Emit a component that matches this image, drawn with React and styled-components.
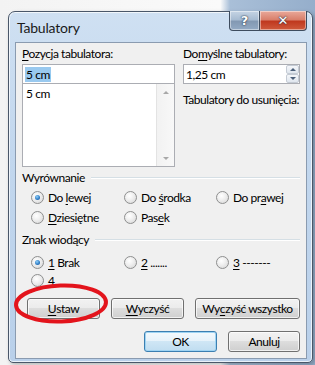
import React from "react";
import styled, { createGlobalStyle } from "styled-components";

const GlobalStyle = createGlobalStyle`
  html, body {
    margin: 0;
    padding: 0;
  }
  body {
    width: 315px;
    height: 365px;
    overflow: hidden;
    font-family: Lato, "Noto Sans", sans-serif;
    font-size: 12px;
    letter-spacing: -0.45px;
    color: #000;
    background: linear-gradient(90deg, #f3f3f3 0%, #fafafa 70%, #a9bfd8 73%, #95aecb 100%);
  }
`;

const Stage = styled.div`
  position: relative;
  padding: 11px 0 0 8px;
  height: 354px;
`;

const Window = styled.div`
  width: 303px;
  height: 350px;
  border: 1px solid #4a5769;
  border-radius: 7px 7px 5px 5px;
  background: linear-gradient(180deg, #cfe0f2 0%, #c2d7ee 40%, #b9d0ea 100%);
  box-shadow: inset 0 0 0 1px rgba(255, 255, 255, 0.7), 2px 2px 4px rgba(0, 0, 0, 0.25);
  display: flex;
  flex-direction: column;
`;

const TitleBar = styled.div`
  height: 30px;
  display: flex;
  align-items: flex-start;
  justify-content: space-between;
`;

const Title = styled.div`
  padding: 7px 0 0 8px;
  font-size: 14px;
  letter-spacing: -0.2px;
  color: #1a1a1a;
`;

const Caption = styled.div`
  display: flex;
  margin: -1px 5px 0 0;
`;

const CaptionButton = styled.div`
  height: 19px;
  width: ${(p) => p.w}px;
  display: flex;
  align-items: center;
  justify-content: center;
  border: 1px solid #3e4c5e;
  border-top: none;
  border-left: ${(p) => (p.first ? "1px solid #3e4c5e" : "none")};
  border-radius: ${(p) => (p.first ? "0 0 0 4px" : "0 0 4px 0")};
  background: ${(p) =>
    p.close
      ? "linear-gradient(180deg, #e9a99b 0%, #d9806c 45%, #c0391f 55%, #cf5a3c 100%)"
      : "linear-gradient(180deg, #c6d4e4 0%, #a8bcd2 45%, #8399b3 55%, #93aac4 100%)"};
  box-shadow: inset 0 0 0 1px rgba(255, 255, 255, 0.45);
  color: #fff;
  font-family: "DejaVu Sans", sans-serif;
  font-weight: bold;
  font-size: 13px;
  letter-spacing: 0;
  text-shadow: 0 0 2px #233247, 0 0 1px #233247;
`;

const Panel = styled.div`
  flex: 1;
  margin: 0 5px 3px 6px;
  border: 1px solid #8a9bb0;
  background: #f0f0f0;
  padding: 3px 6px 0 6px;
  display: flex;
  flex-direction: column;
  position: relative;
`;

const TopRow = styled.div`
  display: grid;
  grid-template-columns: 153px 117px;
  column-gap: 8px;
`;

const Column = styled.div`
  display: flex;
  flex-direction: column;
`;

const Label = styled.div`
  height: 18px;
  line-height: 16px;
  white-space: nowrap;
  margin-top: ${(p) => p.mt || 0}px;
`;

const U = styled.span`
  text-decoration: underline;
  text-underline-offset: 2px;
`;

const TextBox = styled.div`
  border: 1px solid #abadb3;
  background: #fff;
  display: flex;
  align-items: center;
  padding-left: 2px;
  box-sizing: border-box;
  height: 20px;
`;

const Selected = styled.span`
  background: #99c9ef;
  color: #000;
  padding: 0 1px;
  line-height: 15px;
`;

const ListBox = styled.div`
  height: 82px;
  border: 1px solid #abadb3;
  border-top: none;
  background: #fff;
  display: flex;
`;

const ListItems = styled.div`
  flex: 1;
  padding: 2px 0 0 3px;
  line-height: 15px;
`;

const ScrollBar = styled.div`
  width: 17px;
  border-left: 1px solid #e3e3e3;
  background: linear-gradient(90deg, #f2f2f2, #f8f8f8);
  display: flex;
  flex-direction: column;
  justify-content: space-between;
  align-items: center;
  padding: 7px 0 6px;
`;

const Arrow = styled.div`
  width: 0;
  height: 0;
  border-left: 3px solid transparent;
  border-right: 3px solid transparent;
  ${(p) =>
    p.down ? "border-top: 3px solid #a8a8a8;" : "border-bottom: 3px solid #a8a8a8;"}
`;

const Spin = styled.div`
  width: 13px;
  display: flex;
  flex-direction: column;
  margin-left: auto;
  align-self: stretch;
`;

const SpinPart = styled.div`
  flex: 1;
  display: flex;
  align-items: center;
  justify-content: center;
  border: 1px solid #c4cbd4;
  border-radius: 2px;
  background: linear-gradient(180deg, #f5f7fa, #dfe6ee);
`;

const SpinArrow = styled.div`
  width: 0;
  height: 0;
  border-left: 3px solid transparent;
  border-right: 3px solid transparent;
  ${(p) =>
    p.down ? "border-top: 3px solid #4c607a;" : "border-bottom: 3px solid #4c607a;"}
`;

const GroupHeader = styled.div`
  display: flex;
  align-items: center;
  height: 17px;
  margin-top: ${(p) => p.mt}px;
  white-space: nowrap;
  &::after {
    content: "";
    flex: 1;
    margin: 1px 0 0 6px;
    border-top: 1px solid #d5dfe5;
    border-bottom: 1px solid #fff;
  }
`;

const RadioGrid = styled.div`
  display: grid;
  grid-template-columns: 93px 92px auto;
  grid-auto-rows: ${(p) => p.row}px;
  padding: ${(p) => p.pt}px 0 0 9px;
  align-items: center;
`;

const RadioItem = styled.div`
  display: flex;
  align-items: center;
  gap: 4px;
  white-space: nowrap;
`;

const Circle = styled.div`
  width: 11px;
  height: 11px;
  border-radius: 50%;
  border: 1px solid #8e8f8f;
  background: radial-gradient(circle at 40% 35%, #ffffff 0%, #f0f0f0 40%, #d4d4d4 100%);
  display: flex;
  align-items: center;
  justify-content: center;
  flex: none;
  &::after {
    content: "";
    display: ${(p) => (p.on ? "block" : "none")};
    width: 5px;
    height: 5px;
    border-radius: 50%;
    background: radial-gradient(circle at 40% 35%, #8fd0fb 0%, #2b79c2 60%, #1c4f8c 100%);
  }
`;

const ButtonRow = styled.div`
  display: flex;
  justify-content: flex-end;
  gap: 11px;
  margin-top: ${(p) => p.mt}px;
`;

const Button = styled.div`
  box-sizing: border-box;
  width: ${(p) => p.w}px;
  height: 21px;
  border: 1px solid ${(p) => (p.primary ? "#3c7fb1" : "#707070")};
  border-radius: 3px;
  background: ${(p) =>
    p.primary
      ? "linear-gradient(180deg, #f4f9fc 0%, #e6f2fa 49%, #cfe6f5 50%, #c0ddf0 100%)"
      : "linear-gradient(180deg, #f2f2f2 0%, #ebebeb 49%, #dddddd 50%, #cfcfcf 100%)"};
  box-shadow: inset 0 0 0 1px ${(p) => (p.primary ? "#9fd4f3" : "rgba(255,255,255,0.7)")};
  display: flex;
  align-items: center;
  justify-content: center;
  white-space: nowrap;
`;

const Annotation = styled.svg`
  position: absolute;
  left: 0;
  top: 0;
  pointer-events: none;
`;

const Radio = ({ on, children }) => (
  <RadioItem>
    <Circle on={on} />
    <span>{children}</span>
  </RadioItem>
);

export default function App() {
  return (
    <>
      <GlobalStyle />
      <Stage>
        <Window>
          <TitleBar>
            <Title>Tabulatory</Title>
            <Caption>
              <CaptionButton first w={29}>?</CaptionButton>
              <CaptionButton close w={46}>✕</CaptionButton>
            </Caption>
          </TitleBar>
          <Panel>
            <TopRow>
              <Column>
                <Label>
                  <U>P</U>ozycja tabulatora:
                </Label>
                <TextBox>
                  <Selected>5 cm</Selected>
                </TextBox>
                <ListBox>
                  <ListItems>5 cm</ListItems>
                  <ScrollBar>
                    <Arrow />
                    <Arrow down />
                  </ScrollBar>
                </ListBox>
              </Column>
              <Column>
                <Label>
                  Do<U>m</U>yślne tabulatory:
                </Label>
                <TextBox>
                  <span>1,25 cm</span>
                  <Spin>
                    <SpinPart>
                      <SpinArrow />
                    </SpinPart>
                    <SpinPart>
                      <SpinArrow down />
                    </SpinPart>
                  </Spin>
                </TextBox>
                <Label mt={8}>Tabulatory do usunięcia:</Label>
              </Column>
            </TopRow>

            <GroupHeader mt={2}>Wyrównanie</GroupHeader>
            <RadioGrid row={19.5} pt={2}>
              <Radio on>
                Do <U>l</U>ewej
              </Radio>
              <Radio>
                Do <U>ś</U>rodka
              </Radio>
              <Radio>
                Do pr<U>a</U>wej
              </Radio>
              <Radio>
                <U>D</U>ziesiętne
              </Radio>
              <Radio>
                Pas<U>e</U>k
              </Radio>
            </RadioGrid>

            <GroupHeader mt={4}>Znak wiodący</GroupHeader>
            <RadioGrid row={18.5} pt={5}>
              <Radio on>
                <U>1</U> Brak
              </Radio>
              <Radio>
                <U>2</U> .......
              </Radio>
              <Radio>
                <U>3</U> -------
              </Radio>
              <Radio>4</Radio>
            </RadioGrid>

            <ButtonRow mt={8}>
              <Button w={73}>
                <U>U</U>staw
              </Button>
              <Button w={73}>
                <U>W</U>yczyść
              </Button>
              <Button w={105}>
                Wy<U>c</U>zyść wszystko
              </Button>
            </ButtonRow>
            <ButtonRow mt={12}>
              <Button w={73} primary>
                OK
              </Button>
              <Button w={72}>Anuluj</Button>
            </ButtonRow>
          </Panel>
        </Window>
        <Annotation width="315" height="365" viewBox="0 0 315 365">
          <ellipse
            cx="61"
            cy="303.5"
            rx="45"
            ry="18"
            fill="none"
            stroke="#e3141c"
            strokeWidth="4"
            transform="rotate(-2 61 303.5)"
          />
        </Annotation>
      </Stage>
    </>
  );
}
